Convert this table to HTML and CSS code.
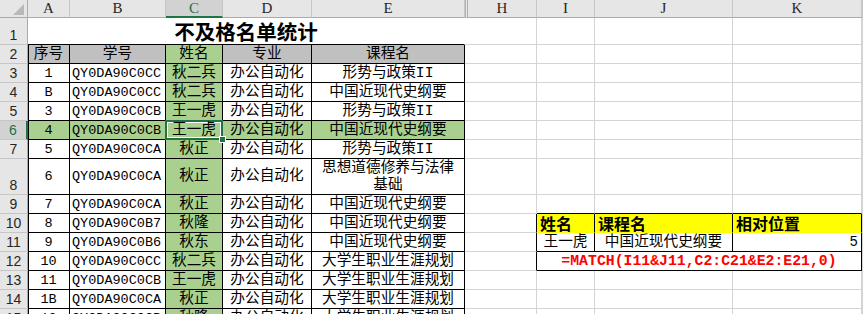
FILE: index.html
```html
<!DOCTYPE html>
<html lang="zh">
<head>
<meta charset="utf-8">
<title>不及格名单统计</title>
<link rel="stylesheet" href="styles.css">
</head>
<body>
<div class="sheet">
  <!-- column headers -->
  <div class="corner"><svg width="28" height="18" viewBox="0 0 28 18"><polygon points="24,4 24,15 13,15" fill="#b9b9b9"/></svg></div>
  <div class="ch">A</div><div class="ch">B</div><div class="ch sel">C</div><div class="ch">D</div><div class="ch">E</div>
  <div class="ch hid">H</div><div class="ch">I</div><div class="ch">J</div><div class="ch">K</div><div class="ch"></div>

  <!-- row 1 -->
  <div class="rh">1</div>
  <div class="c title">不及格名单统计</div>
  <div class="c"></div><div class="c"></div><div class="c"></div><div class="c"></div><div class="c"></div>

  <!-- row 2 -->
  <div class="rh">2</div>
  <div class="c t a hd">序号</div><div class="c t hd">学号</div><div class="c t g">姓名</div><div class="c t hd">专业</div><div class="c t hd">课程名</div>
  <div class="c"></div><div class="c"></div><div class="c"></div><div class="c"></div><div class="c"></div>

  <!-- row 3 -->
  <div class="rh">3</div>
  <div class="c t a mono">1</div><div class="c t l mono">QY0DA90C0CC</div><div class="c t g">秋二兵</div><div class="c t">办公自动化</div><div class="c t">形势与政策II</div>
  <div class="c"></div><div class="c"></div><div class="c"></div><div class="c"></div><div class="c"></div>

  <!-- row 4 -->
  <div class="rh">4</div>
  <div class="c t a mono">B</div><div class="c t l mono">QY0DA90C0CC</div><div class="c t g">秋二兵</div><div class="c t">办公自动化</div><div class="c t">中国近现代史纲要</div>
  <div class="c"></div><div class="c"></div><div class="c"></div><div class="c"></div><div class="c"></div>

  <!-- row 5 -->
  <div class="rh">5</div>
  <div class="c t a mono">3</div><div class="c t l mono">QY0DA90C0CB</div><div class="c t g">王一虎</div><div class="c t">办公自动化</div><div class="c t">形势与政策II</div>
  <div class="c"></div><div class="c"></div><div class="c"></div><div class="c"></div><div class="c"></div>

  <!-- row 6 (selected) -->
  <div class="rh rsel">6</div>
  <div class="c t a mono g">4</div><div class="c t l mono g">QY0DA90C0CB</div><div class="c t g active">王一虎</div><div class="c t g">办公自动化</div><div class="c t g">中国近现代史纲要</div>
  <div class="c"></div><div class="c"></div><div class="c"></div><div class="c"></div><div class="c"></div>

  <!-- row 7 -->
  <div class="rh">7</div>
  <div class="c t a mono">5</div><div class="c t l mono">QY0DA90C0CA</div><div class="c t g">秋正</div><div class="c t">办公自动化</div><div class="c t">形势与政策II</div>
  <div class="c"></div><div class="c"></div><div class="c"></div><div class="c"></div><div class="c"></div>

  <!-- row 8 -->
  <div class="rh">8</div>
  <div class="c t a mono">6</div><div class="c t l mono">QY0DA90C0CA</div><div class="c t g">秋正</div><div class="c t">办公自动化</div><div class="c t wrap">思想道德修养与法律<br>基础</div>
  <div class="c"></div><div class="c"></div><div class="c"></div><div class="c"></div><div class="c"></div>

  <!-- row 9 -->
  <div class="rh">9</div>
  <div class="c t a mono">7</div><div class="c t l mono">QY0DA90C0CA</div><div class="c t g">秋正</div><div class="c t">办公自动化</div><div class="c t">中国近现代史纲要</div>
  <div class="c"></div><div class="c lk-top"></div><div class="c lk-top"></div><div class="c lk-top"></div><div class="c"></div>

  <!-- row 10 -->
  <div class="rh">10</div>
  <div class="c t a mono">8</div><div class="c t l mono">QY0DA90C0B7</div><div class="c t g">秋隆</div><div class="c t">办公自动化</div><div class="c t">中国近现代史纲要</div>
  <div class="c lk-left"></div><div class="c lk lk-h">姓名</div><div class="c lk lk-h">课程名</div><div class="c lk lk-h">相对位置</div><div class="c"></div>

  <!-- row 11 -->
  <div class="rh">11</div>
  <div class="c t a mono">9</div><div class="c t l mono">QY0DA90C0B6</div><div class="c t g">秋东</div><div class="c t">办公自动化</div><div class="c t">中国近现代史纲要</div>
  <div class="c lk-left"></div><div class="c lk lk-b">王一虎</div><div class="c lk lk-b">中国近现代史纲要</div><div class="c lk lk-b num">5</div><div class="c"></div>

  <!-- row 12 -->
  <div class="rh">12</div>
  <div class="c t a mono">10</div><div class="c t l mono">QY0DA90C0CC</div><div class="c t g">秋二兵</div><div class="c t">办公自动化</div><div class="c t">大学生职业生涯规划</div>
  <div class="c lk-left"></div><div class="c lk formula">=MATCH(I11&amp;J11,C2:C21&amp;E2:E21,0)</div><div class="c"></div>

  <!-- row 13 -->
  <div class="rh">13</div>
  <div class="c t a mono">11</div><div class="c t l mono">QY0DA90C0CB</div><div class="c t g">王一虎</div><div class="c t">办公自动化</div><div class="c t">大学生职业生涯规划</div>
  <div class="c"></div><div class="c"></div><div class="c"></div><div class="c"></div><div class="c"></div>

  <!-- row 14 -->
  <div class="rh">14</div>
  <div class="c t a mono">1B</div><div class="c t l mono">QY0DA90C0CA</div><div class="c t g">秋正</div><div class="c t">办公自动化</div><div class="c t">大学生职业生涯规划</div>
  <div class="c"></div><div class="c"></div><div class="c"></div><div class="c"></div><div class="c"></div>

  <!-- row 15 -->
  <div class="rh">15</div>
  <div class="c t a mono">13</div><div class="c t l mono">QY0DA90C0CB</div><div class="c t g">秋隆</div><div class="c t">办公自动化</div><div class="c t">大学生职业生涯规划</div>
  <div class="c"></div><div class="c"></div><div class="c"></div><div class="c"></div><div class="c"></div>
</div>
</body>
</html>
```

FILE: styles.css
```css
html, body {
  margin: 0;
  padding: 0;
  background: #fff;
  overflow: hidden;
}

.sheet {
  display: grid;
  grid-template-columns: 28px 42px 96px 57px 89px 153px 72px 58px 138px 129px 1fr;
  grid-template-rows: 18px 27px repeat(6, 19px) 36px repeat(6, 19px) 19px;
  width: 863px;
  height: 314px;
  overflow: hidden;
  font-family: "Liberation Mono", "Noto Sans CJK SC", monospace;
  font-size: 14.67px;
  color: #000;
}

.corner {
  background: #e6e6e6;
  border-right: 1px solid #ababab;
  border-bottom: 1px solid #ababab;
  box-sizing: border-box;
  overflow: hidden;
}
.corner svg { display: block; }

.ch {
  box-sizing: border-box;
  background: #e6e6e6;
  border-right: 1px solid #c6c6c6;
  border-bottom: 1px solid #ababab;
  display: flex;
  align-items: center;
  justify-content: center;
  font-family: "Liberation Serif", serif;
  font-size: 15px;
  color: #262626;
  line-height: 1;
}
.ch.sel {
  background: #d2d2d2;
  color: #217346;
  border-bottom: 2px solid #217346;
}
.ch.hid {
  border-left: 3px double #b0b0b0;
}

.rh {
  box-sizing: border-box;
  background: #e6e6e6;
  border-right: 1px solid #ababab;
  border-bottom: 1px solid #c6c6c6;
  display: flex;
  align-items: flex-end;
  justify-content: center;
  font-family: "Liberation Sans", sans-serif;
  font-size: 14px;
  color: #262626;
  line-height: 17px;
}
.rh.rsel {
  background: #d2d2d2;
  color: #217346;
  border-right: 2px solid #217346;
}

.c {
  box-sizing: border-box;
  border-right: 1px solid #d4d4d4;
  border-bottom: 1px solid #d4d4d4;
  display: flex;
  align-items: center;
  justify-content: center;
  white-space: nowrap;
  line-height: 17px;
}

.title {
  grid-column: 2 / span 5;
  border-right-color: #fff;
  border-bottom-color: #000;
  align-items: flex-end;
  font-family: "Noto Sans CJK SC", sans-serif;
  font-weight: bold;
  font-size: 20.5px;
  line-height: 24px;
  padding-bottom: 1px;
}

.t {
  border-right-color: #000;
  border-bottom-color: #000;
}
.a {
  box-shadow: inset 1px 0 0 #000;
}
.hd { background: #c0c0c0; }
.g { background: #a9d08e; }
.mono { font-size: 13.5px; }
.l {
  justify-content: flex-start;
  padding-left: 2px;
}
.wrap {
  white-space: normal;
  text-align: center;
  line-height: 17px;
}

.active {
  position: relative;
  z-index: 2;
}
.active::before {
  content: "";
  position: absolute;
  z-index: -1;
  left: -1px;
  top: -1px;
  right: -1px;
  bottom: -1px;
  border: 2px solid #217346;
  box-shadow: inset 0 0 0 1px #fff;
}
.active::after {
  content: "";
  position: absolute;
  right: -4px;
  bottom: -4px;
  width: 5px;
  height: 5px;
  background: #217346;
  border: 1px solid #fff;
}

/* lookup table I10:K12 */
.lk-top { border-bottom-color: #000; }
.lk-left { border-right-color: #000; }
.lk { border-right-color: #000; }
.lk-h {
  background: #ffff00;
  justify-content: flex-start;
  padding-left: 3px;
  font-family: "Noto Sans CJK SC", sans-serif;
  font-weight: bold;
  font-size: 16px;
  border-bottom-color: #ffff00;
}
.lk-b {
  border-bottom-color: #000;
}
.num {
  justify-content: flex-end;
  padding-right: 3px;
  font-size: 14px;
}
.formula {
  grid-column: 8 / span 3;
  border-bottom-color: #000;
  color: #ff0000;
  font-weight: bold;
  font-size: 14.8px;
}
```
